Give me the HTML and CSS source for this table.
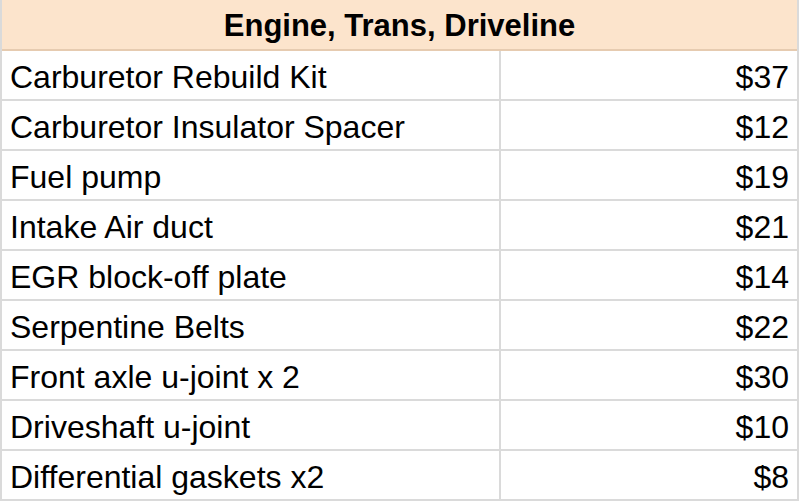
FILE: index.html
```html
<!DOCTYPE html>
<html>
<head>
<meta charset="utf-8">
<link rel="stylesheet" href="styles.css">
</head>
<body>
<div class="sheet">
  <div class="head">Engine, Trans, Driveline</div>
  <div class="row"><div class="name">Carburetor Rebuild Kit</div><div class="price">$37</div></div>
  <div class="row"><div class="name">Carburetor Insulator Spacer</div><div class="price">$12</div></div>
  <div class="row"><div class="name">Fuel pump</div><div class="price">$19</div></div>
  <div class="row"><div class="name">Intake Air duct</div><div class="price">$21</div></div>
  <div class="row"><div class="name">EGR block-off plate</div><div class="price">$14</div></div>
  <div class="row"><div class="name">Serpentine Belts</div><div class="price">$22</div></div>
  <div class="row"><div class="name">Front axle u-joint x 2</div><div class="price">$30</div></div>
  <div class="row"><div class="name">Driveshaft u-joint</div><div class="price">$10</div></div>
  <div class="row"><div class="name">Differential gaskets x2</div><div class="price">$8</div></div>
</div>
</body>
</html>
```
FILE: styles.css
```css
html, body {
  margin: 0;
  padding: 0;
  background: #ffffff;
}
.sheet {
  width: 795px;
  border-left: 2px solid #dadada;
  border-right: 2px solid #dadada;
  font-family: "Liberation Sans", Arial, sans-serif;
  color: #000;
}
.head {
  height: 46px;
  padding-top: 3px;
  background: #fce4cc;
  border-bottom: 2px solid #e6cbb0;
  text-align: center;
  font-weight: bold;
  font-size: 31px;
  line-height: 46px;
}
.row {
  display: grid;
  grid-template-columns: 497px 296px;
  column-gap: 2px;
  background: #dadada;
  border-bottom: 2px solid #dadada;
}
.name, .price {
  background: #fff;
  height: 48px;
  font-size: 32px;
  line-height: 44px;
  padding-top: 4px;
  box-sizing: border-box;
  white-space: nowrap;
}
.name {
  padding-left: 8px;
}
.price {
  text-align: right;
  padding-right: 8px;
}
```
